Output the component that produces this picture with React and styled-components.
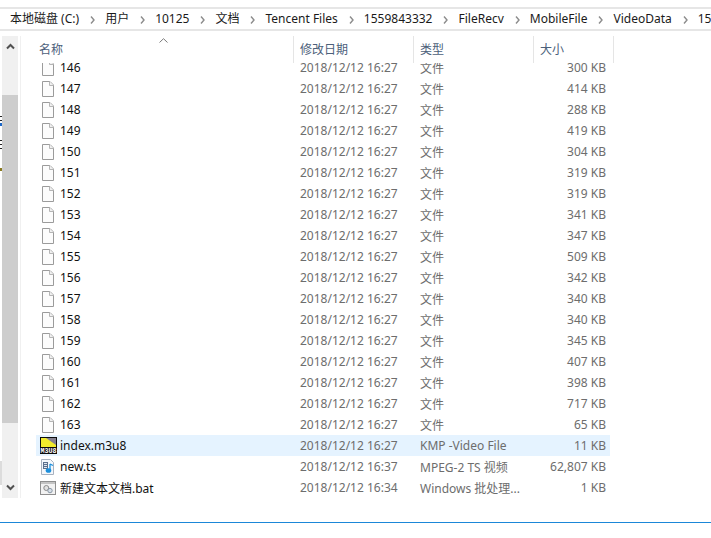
import React from 'react';
import styled, { createGlobalStyle } from 'styled-components';

const GlobalStyle = createGlobalStyle`
  html, body {
    margin: 0;
    padding: 0;
    background: #fff;
  }
`;

const Page = styled.div`
  position: relative;
  width: 711px;
  height: 538px;
  overflow: hidden;
  background: #fff;
  font-family: "Noto Sans", "Noto Sans CJK SC", sans-serif;
  font-size: 12px;
  color: #1a1a1a;
`;

const AddressBar = styled.div`
  display: flex;
  align-items: center;
  box-sizing: border-box;
  height: 24px;
  margin-top: 7px;
  padding-left: 10px;
  border-top: 2px solid #e6e6e6;
  border-bottom: 2px solid #e6e6e6;
  white-space: nowrap;
  overflow: hidden;
`;

const Crumb = styled.span`
  flex: none;
  line-height: 20px;
`;

const CrumbArrow = styled.svg`
  flex: none;
  width: 5px;
  height: 8px;
  margin: 1px 10px 0 11px;
`;

const Explorer = styled.div`
  display: flex;
  height: 462px;
  margin-top: 5px;
  padding-left: 2px;
`;

const Scrollbar = styled.div`
  flex: none;
  display: flex;
  flex-direction: column;
  width: 16px;
  background: #f0f0f0;
`;

const ScrollButton = styled.div`
  flex: none;
  display: flex;
  align-items: center;
  justify-content: center;
  height: ${({ $h }) => $h}px;
`;

const ScrollTrack = styled.div`
  flex: 1;
  padding-top: 38px;
`;

const ScrollThumb = styled.div`
  height: 328px;
  background: #cdcdcd;
`;

const Divider = styled.div`
  flex: none;
  width: 1px;
  margin-left: 2px;
  background: #f0f0f0;
`;

const ListPane = styled.div`
  flex: none;
  width: 590px;
  margin-left: 15px;
  display: flex;
  flex-direction: column;
  overflow: hidden;
`;

const Header = styled.div`
  flex: none;
  display: grid;
  grid-template-columns: 258px 120px 120px 80px;
  height: 27px;
  color: #4c607a;
`;

const HeaderCell = styled.div`
  position: relative;
  box-sizing: border-box;
  padding: 5px 0 0 ${({ $first }) => ($first ? 3 : 6)}px;
  line-height: 17px;
  border-right: 1px solid #e5e5e5;
`;

const SortMark = styled.svg`
  position: absolute;
  top: 2px;
  left: 123px;
  width: 9px;
  height: 5px;
`;

const Rows = styled.div`
  flex: 1;
  width: 574px;
  overflow: hidden;
`;

const Row = styled.div`
  display: grid;
  grid-template-columns: 264px 120px 114px 72px;
  align-items: center;
  height: 21px;
  background: ${({ $active }) => ($active ? '#e5f3ff' : 'transparent')};

  &:first-child {
    margin-top: -6px;
  }
`;

const NameCell = styled.div`
  display: flex;
  align-items: center;
  gap: 6px;
  padding-left: 6px;
  color: #111;
  white-space: nowrap;
`;

const IconSlot = styled.span`
  flex: none;
  display: flex;
  justify-content: center;
  width: 18px;
  margin-left: -3px;
  margin-right: -3px;
`;

const MetaCell = styled.div`
  color: #6d6d6d;
  white-space: nowrap;
`;

const SizeCell = styled(MetaCell)`
  text-align: right;
`;

const StatusLine = styled.div`
  height: 1px;
  margin-top: 24px;
  background: #1b87d8;
`;

const Sliver = styled.svg`
  position: absolute;
  left: 0;
  top: 100px;
  width: 2px;
  height: 400px;
`;

const Chevron = ({ up }) => (
  <svg width="9" height="7" viewBox="0 0 9 7">
    <path
      d={up ? 'M1 5.5 L4.5 2 L8 5.5' : 'M1 1.5 L4.5 5 L8 1.5'}
      fill="none"
      stroke="#505050"
      strokeWidth="2"
    />
  </svg>
);

const BlankFile = () => (
  <svg width="12" height="16" viewBox="0 0 12 16">
    <path d="M0.5 0.5 H8 L11.5 4 V15.5 H0.5 Z" fill="#fcfcfc" stroke="#9b9b9b" />
    <path d="M7.5 0.5 V4.5 H11.5" fill="#f0f0f0" stroke="#b5b5b5" />
  </svg>
);

const KmpIcon = () => (
  <svg width="17" height="17" viewBox="0 0 17 17">
    <rect width="17" height="17" fill="#0c0c0c" />
    <path d="M1 1 H12 L16 6 V10 H1 Z" fill="#f2ec2c" />
    <path d="M6 1 H16 V8 Z" fill="#85808f" />
    <text x="8.5" y="16.2" textAnchor="middle" textLength="16" lengthAdjust="spacingAndGlyphs" fontSize="7" fontWeight="700" fill="#fff" fontFamily="Liberation Mono, monospace">M3U8</text>
  </svg>
);

const TsIcon = () => (
  <svg width="14" height="16" viewBox="0 0 14 16">
    <path d="M0.5 0.5 H9.5 L12.5 3.5 V15.5 H0.5 Z" fill="#f4f7fb" stroke="#a8b2c0" />
    <rect x="2" y="3" width="5" height="7" fill="#5a6f8c" />
    <path d="M3 4.5 H6 M3 6.5 H6 M3 8.5 H6" stroke="#dfe6ef" />
    <path d="M9 5 V11 M9 5 L12 6.5" fill="none" stroke="#1c8fdc" strokeWidth="1.3" />
    <ellipse cx="7.5" cy="11.5" rx="2.8" ry="2.3" fill="#1c8fdc" />
  </svg>
);

const BatIcon = () => (
  <svg width="16" height="14" viewBox="0 0 16 14">
    <rect x="0.5" y="0.5" width="15" height="13" fill="#f2f2f2" stroke="#8f8f8f" />
    <rect x="1" y="1" width="14" height="2" fill="#c4c4c4" />
    <circle cx="6.3" cy="7" r="2.5" fill="#e2e2e2" stroke="#8a8a8a" />
    <circle cx="10" cy="9.6" r="2.2" fill="#d8e0e8" stroke="#8a97a5" />
  </svg>
);

const crumbs = ['本地磁盘 (C:)', '用户', '10125', '文档', 'Tencent Files', '1559843332', 'FileRecv', 'MobileFile', 'VideoData', '15'];

const sizes = [
  ['146', '300'], ['147', '414'], ['148', '288'], ['149', '419'], ['150', '304'],
  ['151', '319'], ['152', '319'], ['153', '341'], ['154', '347'], ['155', '509'],
  ['156', '342'], ['157', '340'], ['158', '340'], ['159', '345'], ['160', '407'],
  ['161', '398'], ['162', '717'], ['163', '65'],
];

const files = [
  ...sizes.map(([name, size]) => ({
    name,
    date: '2018/12/12 16:27',
    type: '文件',
    size: `${size} KB`,
    icon: <BlankFile />,
  })),
  { name: 'index.m3u8', date: '2018/12/12 16:27', type: 'KMP -Video File', size: '11 KB', icon: <KmpIcon />, active: true },
  { name: 'new.ts', date: '2018/12/12 16:37', type: 'MPEG-2 TS 视频', size: '62,807 KB', icon: <TsIcon /> },
  { name: '新建文本文档.bat', date: '2018/12/12 16:34', type: 'Windows 批处理...', size: '1 KB', icon: <BatIcon /> },
];

const App = () => (
  <Page>
    <GlobalStyle />
    <AddressBar>
      {crumbs.map((crumb, i) => (
        <React.Fragment key={crumb}>
          <Crumb>{crumb}</Crumb>
          {i < crumbs.length - 1 && (
            <CrumbArrow viewBox="0 0 5 8">
              <path d="M1 0.5 L4 4 L1 7.5" fill="none" stroke="#8c8c8c" strokeWidth="1.4" />
            </CrumbArrow>
          )}
        </React.Fragment>
      ))}
    </AddressBar>
    <Explorer>
      <Scrollbar>
        <ScrollButton $h={21}><Chevron up /></ScrollButton>
        <ScrollTrack><ScrollThumb /></ScrollTrack>
        <ScrollButton $h={21}><Chevron /></ScrollButton>
      </Scrollbar>
      <Divider />
      <ListPane>
        <Header>
          <HeaderCell $first>
            名称
            <SortMark viewBox="0 0 9 5">
              <path d="M0.5 4.5 L4.5 0.7 L8.5 4.5" fill="none" stroke="#7a7a7a" />
            </SortMark>
          </HeaderCell>
          <HeaderCell>修改日期</HeaderCell>
          <HeaderCell>类型</HeaderCell>
          <HeaderCell>大小</HeaderCell>
        </Header>
        <Rows>
          {files.map((file) => (
            <Row key={file.name} $active={file.active}>
              <NameCell>
                <IconSlot>{file.icon}</IconSlot>
                {file.name}
              </NameCell>
              <MetaCell>{file.date}</MetaCell>
              <MetaCell>{file.type}</MetaCell>
              <SizeCell>{file.size}</SizeCell>
            </Row>
          ))}
        </Rows>
      </ListPane>
    </Explorer>
    <StatusLine />
    <Sliver viewBox="0 0 2 400">
      <rect y="16" width="2" height="1" fill="#222" />
      <rect y="20" width="2" height="1" fill="#222" />
      <rect y="23" width="2" height="3" fill="#1a66c8" />
      <rect y="40" width="2" height="1" fill="#222" />
      <rect y="44" width="2" height="1" fill="#222" />
      <rect y="48" width="2" height="1" fill="#222" />
      <rect y="68" width="2" height="3" fill="#8a7a20" />
      <rect y="361" width="2" height="24" fill="#dcdcdc" />
    </Sliver>
  </Page>
);

export default App;
